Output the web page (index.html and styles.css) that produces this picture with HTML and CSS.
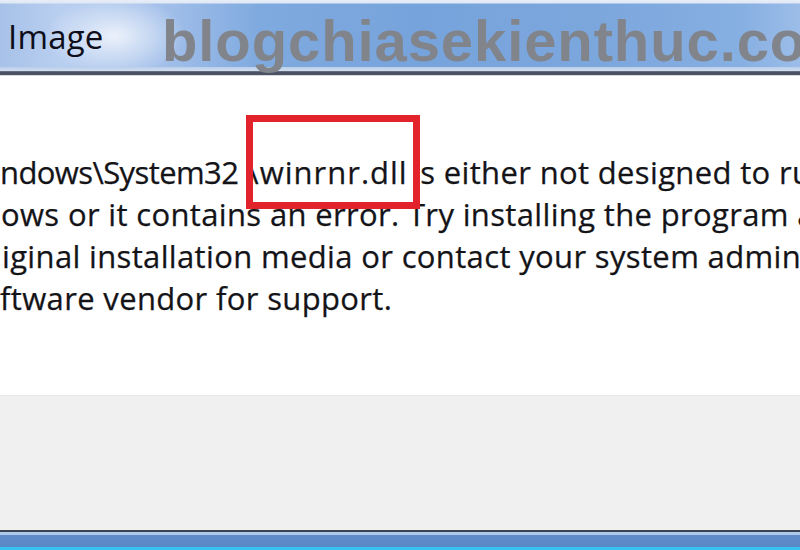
FILE: index.html
```html
<!DOCTYPE html>
<html>
<head>
<meta charset="utf-8">
<link rel="stylesheet" href="styles.css">
</head>
<body>
<div class="screen">
  <div class="titlebar">
    <span class="title">Image</span>
    <span class="watermark">blogchiasekienthuc.com</span>
  </div>
  <div class="content">
    <div class="message">
      <div class="line l1"><span class="path">ndows\System32</span><span class="file">\winrnr.dll</span> is either not designed to run on</div>
      <div class="line l2">ows or it contains an error. Try installing the program again</div>
      <div class="line l3">iginal installation media or contact your system administrator</div>
      <div class="line l4">ftware vendor for support.</div>
    </div>
    <div class="highlight"></div>
  </div>
  <div class="footer"></div>
  <div class="taskbar"></div>
</div>
</body>
</html>
```

FILE: styles.css
```css
html, body {
  margin: 0;
  padding: 0;
  background: #ffffff;
}
.screen {
  width: 800px;
  height: 550px;
  overflow: hidden;
  display: flex;
  flex-direction: column;
  position: relative;
}
.titlebar {
  height: 76px;
  flex: none;
  position: relative;
  display: flex;
  align-items: flex-start;
  background:
    linear-gradient(to bottom, #e8eef8 0, #dfe8f5 3px, transparent 4px, transparent 67px, #b9cdea 67px, #d2def0 71px, #7c8799 71px, #4a5263 72px, #4a5263 75px, #aeb6c2 75px, #ffffff 76px),
    radial-gradient(ellipse 70px 40px at 115px 36px, rgba(255,255,255,0.75), rgba(255,255,255,0) 100%),
    linear-gradient(90deg, #a7c1e8 0, #b9cff0 60px, #a4c0ea 160px, #7faadf 260px, #77a3dc 420px, #7ca7dd 600px, #86afe2 740px, #9cbde8 800px);
}
.title {
  font-family: "Open Sans", "Noto Sans", sans-serif;
  font-size: 33px;
  color: #0e0e1a;
  margin: 14px 0 0 8px;
  letter-spacing: 0.2px;
}
.watermark {
  position: absolute;
  left: 162px;
  top: 7px;
  font-family: "Liberation Sans", Arial, sans-serif;
  font-weight: bold;
  font-size: 58px;
  letter-spacing: 0.9px;
  color: #81848a;
  white-space: nowrap;
}
.content {
  height: 319px;
  flex: none;
  position: relative;
  overflow: hidden;
  background: #ffffff;
}
.message {
  padding-top: 75px;
  font-family: "Open Sans", "Noto Sans", sans-serif;
  font-size: 31px;
  line-height: 42px;
  color: #141418;
  letter-spacing: 0.35px;
  -webkit-text-stroke: 0.25px #141418;
}
.line {
  white-space: nowrap;
}
.path {
  letter-spacing: -0.6px;
}
.file {
  letter-spacing: 1.0px;
  padding-left: 9px;
  margin-right: -4px;
}
.l1 { padding-left: 0; }
.l2 { padding-left: 1px; }
.l3 { padding-left: 2px; }
.l4 { padding-left: 0; }
.highlight {
  position: absolute;
  left: 246px;
  top: 39px;
  width: 160px;
  height: 80px;
  border: 7px solid #e2232c;
}
.footer {
  flex: 1;
  background: #f0f0f0;
  border-top: 1px solid #e9e9e9;
}
.taskbar {
  height: 20px;
  flex: none;
  background: linear-gradient(to bottom, #3a4352 0, #3a4352 2px, #aec6ea 2px, #aec6ea 5px, #5f8cc8 5px, #5b88c6 17px, #36c3f3 17px, #36c3f3 20px);
}
```
